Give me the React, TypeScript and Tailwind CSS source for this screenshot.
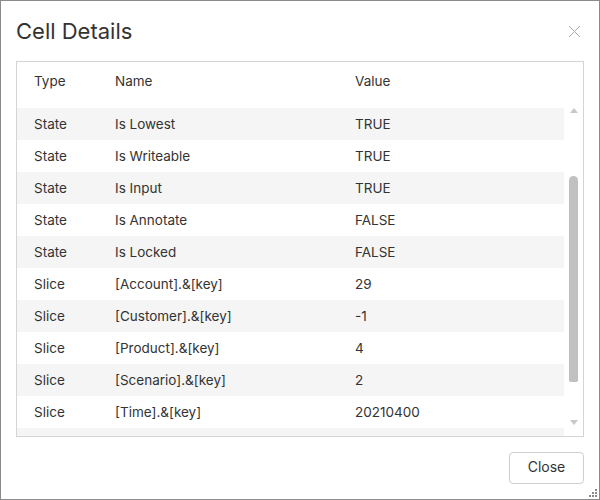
import React from 'react';

// Rows of the cell details grid
const rows: Array<[string, string, string]> = [
  ['State', 'Is Lowest', 'TRUE'],
  ['State', 'Is Writeable', 'TRUE'],
  ['State', 'Is Input', 'TRUE'],
  ['State', 'Is Annotate', 'FALSE'],
  ['State', 'Is Locked', 'FALSE'],
  ['Slice', '[Account].&[key]', '29'],
  ['Slice', '[Customer].&[key]', '-1'],
  ['Slice', '[Product].&[key]', '4'],
  ['Slice', '[Scenario].&[key]', '2'],
  ['Slice', '[Time].&[key]', '20210400'],
  ['', '', ''],
];

function Cells({ cells }: { cells: [string, string, string] }) {
  return (
    <>
      <div className="w-[81px] shrink-0 pl-[17px]">{cells[0]}</div>
      <div className="w-[240px] shrink-0 pl-[17px]">{cells[1]}</div>
      <div className="flex-1 pl-[17px]">{cells[2]}</div>
    </>
  );
}

function Scrollbar() {
  return (
    <div className="w-[19px] shrink-0 flex flex-col items-center">
      <svg width="10" height="6" viewBox="0 0 10 6" className="mt-[5px]">
        <path d="M1 6 L5 1 L9 6 Z" fill="#c8c8c8" />
      </svg>
      <div className="h-[63px]" />
      <div className="w-[9px] h-[206px] rounded-t-[5px] rounded-b-[2px] bg-[#c1c1c1]" />
      <div className="h-[38px]" />
      <svg width="10" height="6" viewBox="0 0 10 6">
        <path d="M1 0 L5 5 L9 0 Z" fill="#c8c8c8" />
      </svg>
    </div>
  );
}

export default function App() {
  return (
    <div
      className="w-[600px] h-[500px] bg-white border border-[#8a8a8a] flex flex-col relative text-[#333]"
      style={{ fontFamily: 'Inter, "Liberation Sans", sans-serif' }}
    >
      {/* Header */}
      <div className="h-[60px] flex items-start justify-between pl-[15px] pr-[18px] pt-[16px]">
        <h1 className="text-[22px] leading-[28px] font-normal">Cell Details</h1>
        <svg width="13" height="13" viewBox="0 0 13 13" className="mt-[8px]">
          <path d="M1 1 L12 12 M12 1 L1 12" stroke="#a8a8a8" strokeWidth="1" />
        </svg>
      </div>

      {/* Grid */}
      <div className="mx-[15px] h-[376px] border border-[#d4d4d4] flex flex-col overflow-hidden text-[13.5px]">
        <div className="h-[40px] shrink-0 flex items-center pr-[19px] pb-[2px]">
          <Cells cells={['Type', 'Name', 'Value']} />
        </div>
        <div className="flex-1 flex overflow-hidden">
          <div className="flex-1 flex flex-col pt-[6px]">
            {rows.map((r, i) => (
              <div
                key={i}
                className={`h-[32px] shrink-0 flex items-center pt-[1px] ${i % 2 === 0 ? 'bg-[#f5f5f5]' : 'bg-white'}`}
              >
                <Cells cells={r} />
              </div>
            ))}
          </div>
          <Scrollbar />
        </div>
      </div>

      {/* Footer */}
      <div className="flex justify-end pr-[15px] pt-[15px]">
        <button className="w-[75px] h-[32px] border border-[#cfcfcf] rounded-[4px] bg-white text-[14px] leading-[20px] pb-[2px] text-[#333]">
          Close
        </button>
      </div>

      {/* Resize grip */}
      <svg width="10" height="10" viewBox="0 0 10 10" className="absolute right-[1px] bottom-[1px]">
        <g fill="#8a8a8a">
          <rect x="7" y="1" width="2" height="2" />
          <rect x="4" y="4" width="2" height="2" />
          <rect x="7" y="4" width="2" height="2" />
          <rect x="1" y="7" width="2" height="2" />
          <rect x="4" y="7" width="2" height="2" />
          <rect x="7" y="7" width="2" height="2" />
        </g>
      </svg>
    </div>
  );
}
